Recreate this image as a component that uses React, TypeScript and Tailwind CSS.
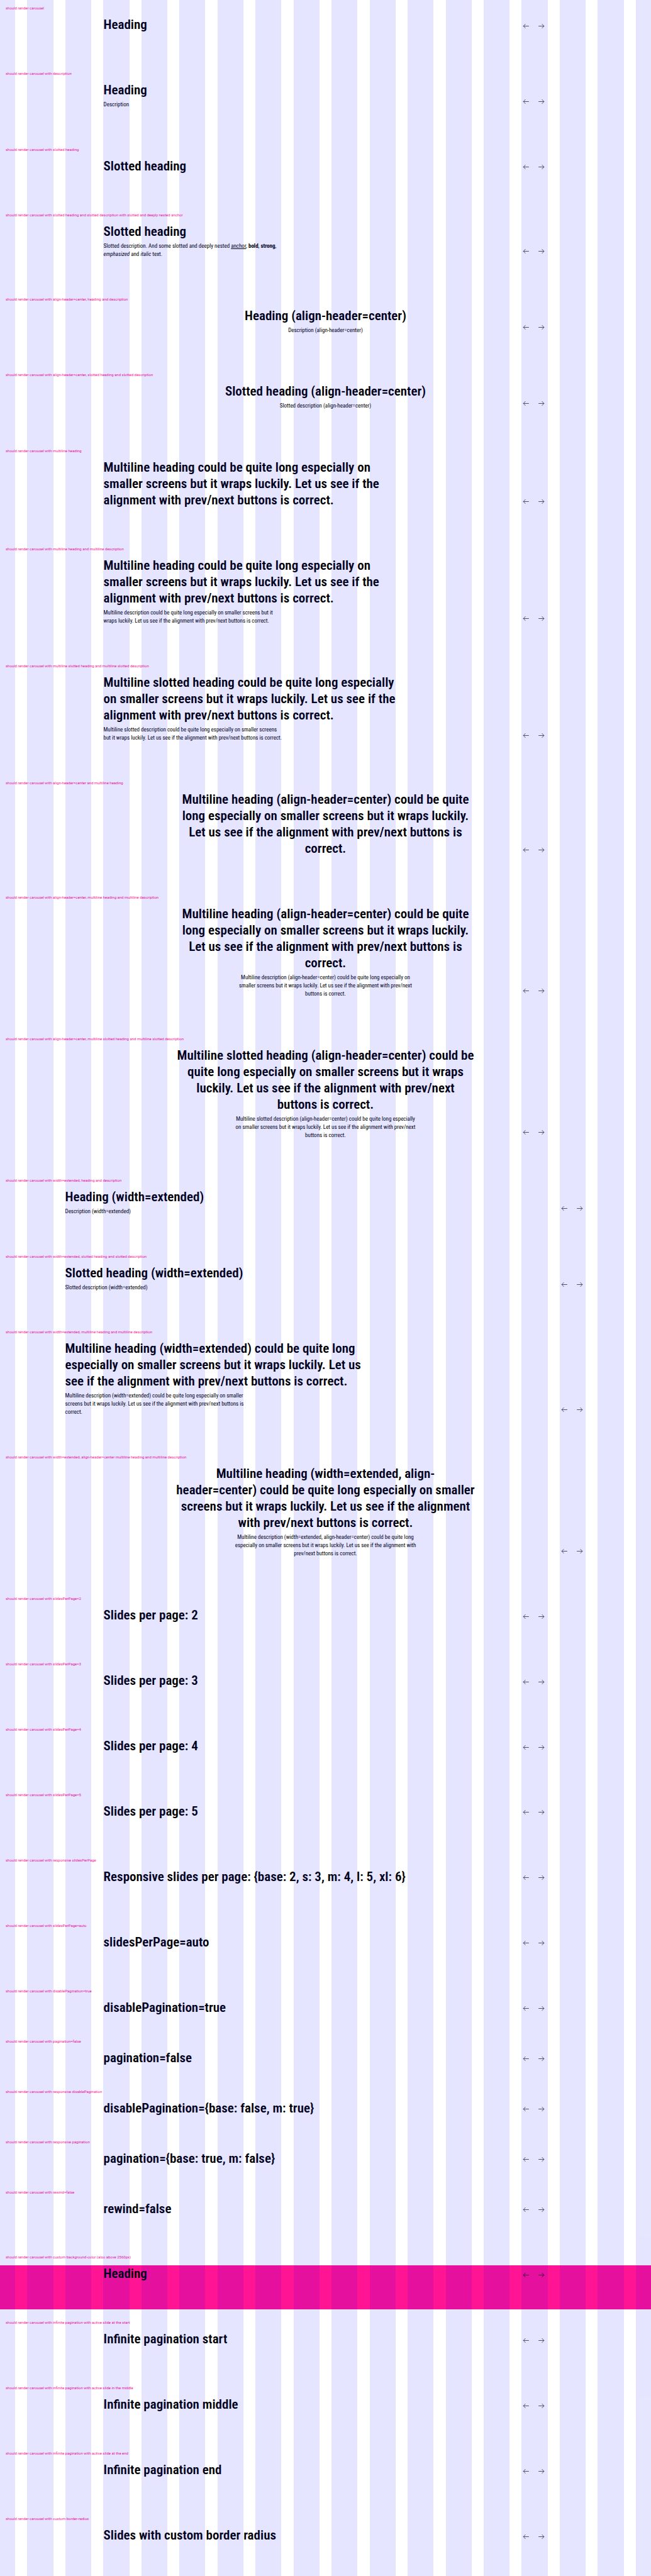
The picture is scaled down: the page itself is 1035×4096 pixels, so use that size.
import type { ReactNode } from "react";

type Story = {
  label: string;
  heading: string;
  description?: ReactNode;
  center?: boolean;
  extended?: boolean;
  compact?: boolean;
  highlight?: boolean;
};

const stories: Story[] = [
  { label: "", heading: "Heading" },
  { label: " with description", heading: "Heading", description: "Description" },
  { label: " with slotted heading", heading: "Slotted heading" },
  {
    label: " with slotted heading and slotted description with slotted and deeply nested anchor",
    heading: "Slotted heading",
    description: (
      <>
        Slotted description. And some slotted and deeply nested{" "}
        <a href="#" className="underline">
          anchor
        </a>
        , <b>bold</b>, <strong>strong</strong>,{"\n"}
        <em>emphasized</em> and <i>italic</i> text.
      </>
    ),
  },
  {
    label: " with align-header=center, heading and description",
    heading: "Heading (align-header=center)",
    description: "Description (align-header=center)",
    center: true,
  },
  {
    label: " with align-header=center, slotted heading and slotted description",
    heading: "Slotted heading (align-header=center)",
    description: "Slotted description (align-header=center)",
    center: true,
  },
  {
    label: " with multiline heading",
    heading:
      "Multiline heading could be quite long especially on\nsmaller screens but it wraps luckily. Let us see if the\nalignment with prev/next buttons is correct.",
  },
  {
    label: " with multiline heading and multiline description",
    heading:
      "Multiline heading could be quite long especially on\nsmaller screens but it wraps luckily. Let us see if the\nalignment with prev/next buttons is correct.",
    description:
      "Multiline description could be quite long especially on smaller screens but it\nwraps luckily. Let us see if the alignment with prev/next buttons is correct.",
  },
  {
    label: " with multiline slotted heading and multiline slotted description",
    heading:
      "Multiline slotted heading could be quite long especially\non smaller screens but it wraps luckily. Let us see if the\nalignment with prev/next buttons is correct.",
    description:
      "Multiline slotted description could be quite long especially on smaller screens\nbut it wraps luckily. Let us see if the alignment with prev/next buttons is correct.",
  },
  {
    label: " with align-header=center and multiline heading",
    heading:
      "Multiline heading (align-header=center) could be quite\nlong especially on smaller screens but it wraps luckily.\nLet us see if the alignment with prev/next buttons is\ncorrect.",
    center: true,
  },
  {
    label: " with align-header=center, multiline heading and multiline description",
    heading:
      "Multiline heading (align-header=center) could be quite\nlong especially on smaller screens but it wraps luckily.\nLet us see if the alignment with prev/next buttons is\ncorrect.",
    description:
      "Multiline description (align-header=center) could be quite long especially on\nsmaller screens but it wraps luckily. Let us see if the alignment with prev/next\nbuttons is correct.",
    center: true,
  },
  {
    label: " with align-header=center, multiline slotted heading and multiline slotted description",
    heading:
      "Multiline slotted heading (align-header=center) could be\nquite long especially on smaller screens but it wraps\nluckily. Let us see if the alignment with prev/next\nbuttons is correct.",
    description:
      "Multiline slotted description (align-header=center) could be quite long especially\non smaller screens but it wraps luckily. Let us see if the alignment with prev/next\nbuttons is correct.",
    center: true,
  },
  {
    label: " with width=extended, heading and description",
    heading: "Heading (width=extended)",
    description: "Description (width=extended)",
    extended: true,
  },
  {
    label: " with width=extended, slotted heading and slotted description",
    heading: "Slotted heading (width=extended)",
    description: "Slotted description (width=extended)",
    extended: true,
  },
  {
    label: " with width=extended, multiline heading and multiline description",
    heading:
      "Multiline heading (width=extended) could be quite long\nespecially on smaller screens but it wraps luckily. Let us\nsee if the alignment with prev/next buttons is correct.",
    description:
      "Multiline description (width=extended) could be quite long especially on smaller\nscreens but it wraps luckily. Let us see if the alignment with prev/next buttons is\ncorrect.",
    extended: true,
  },
  {
    label: " with width=extended, align-header=center multiline heading and multiline description",
    heading:
      "Multiline heading (width=extended, align-\nheader=center) could be quite long especially on smaller\nscreens but it wraps luckily. Let us see if the alignment\nwith prev/next buttons is correct.",
    description:
      "Multiline description (width=extended, align-header=center) could be quite long\nespecially on smaller screens but it wraps luckily. Let us see if the alignment with\nprev/next buttons is correct.",
    center: true,
    extended: true,
  },
  { label: " with slidesPerPage=2", heading: "Slides per page: 2" },
  { label: " with slidesPerPage=3", heading: "Slides per page: 3" },
  { label: " with slidesPerPage=4", heading: "Slides per page: 4" },
  { label: " with slidesPerPage=5", heading: "Slides per page: 5" },
  {
    label: " with responsive slidesPerPage",
    heading: "Responsive slides per page: {base: 2, s: 3, m: 4, l: 5, xl: 6}",
  },
  { label: " with slidesPerPage=auto", heading: "slidesPerPage=auto" },
  { label: " with disablePagination=true", heading: "disablePagination=true", compact: true },
  { label: " with pagination=false", heading: "pagination=false", compact: true },
  {
    label: " with responsive disablePagination",
    heading: "disablePagination={base: false, m: true}",
    compact: true,
  },
  {
    label: " with responsive pagination",
    heading: "pagination={base: true, m: false}",
    compact: true,
  },
  { label: " with rewind=false", heading: "rewind=false" },
  {
    label: " with custom background-color (also above 2560px)",
    heading: "Heading",
    highlight: true,
  },
  {
    label: " with infinite pagination with active slide at the start",
    heading: "Infinite pagination start",
  },
  {
    label: " with infinite pagination with active slide in the middle",
    heading: "Infinite pagination middle",
  },
  {
    label: " with infinite pagination with active slide at the end",
    heading: "Infinite pagination end",
  },
  { label: " with custom border-radius", heading: "Slides with custom border radius" },
];

function Arrow({ d }: { d: string }) {
  return (
    <svg viewBox="0 0 24 24" className="size-[13px]" fill="none" stroke="currentColor" strokeWidth="1.2" aria-hidden="true">
      <path d={d} />
    </svg>
  );
}

function Navigation({ className }: { className: string }) {
  return (
    <div className={`flex shrink-0 gap-1 ${className}`}>
      <button type="button" aria-label="Previous slide" className="flex h-[22px] w-5 items-center justify-center">
        <Arrow d="M20 12H4M10 5.7 4 12l6 6.3" />
      </button>
      <button type="button" aria-label="Next slide" className="flex h-[22px] w-5 items-center justify-center">
        <Arrow d="M4 12h16M14 5.7 20 12l-6 6.3" />
      </button>
    </div>
  );
}

function Carousel({ heading, description, center, extended, compact, highlight }: Story) {
  return (
    <div
      className={`grow ${extended ? "px-[10%]" : "px-[15.9%]"} ${compact ? "pb-5" : "pb-[43px]"} ${highlight ? "bg-[#ff1493]" : ""}`}
    >
      <div className={center ? "grid grid-cols-[1fr_auto_1fr] items-end" : "flex items-end justify-between"}>
        <div className={center ? "col-start-2 text-center" : ""}>
          <h3 className="text-[21px] leading-[26px] font-semibold whitespace-pre-line">{heading}</h3>
          {description && <p className="mt-1 text-[9px] leading-[13px] whitespace-pre-line">{description}</p>}
        </div>
        <Navigation className={center ? "col-start-3 justify-self-end" : ""} />
      </div>
    </div>
  );
}

function GridOverlay() {
  return (
    <div className="pointer-events-none absolute inset-0 flex justify-center overflow-hidden" aria-hidden="true">
      <div className="grid w-[103.3%] shrink-0 grid-cols-18 gap-x-[1.8%]">
        {Array.from({ length: 18 }, (_, i) => (
          <div key={i} className="bg-[#0000ff]/10" />
        ))}
      </div>
    </div>
  );
}

export default function App() {
  return (
    <main className="relative flex min-h-screen flex-col bg-white font-['Roboto_Condensed','Roboto',sans-serif] text-[#010205]">
      {stories.map((story) => (
        <section key={story.label} className={`flex flex-col pb-2 ${story.compact ? "" : "grow"}`}>
          <h2 className="flex h-[26px] items-center pl-[9px] font-['Roboto',sans-serif] text-[6px] leading-[8px] text-[#ff1493]">
            should render carousel{story.label}
          </h2>
          <Carousel {...story} />
        </section>
      ))}
      <GridOverlay />
    </main>
  );
}
